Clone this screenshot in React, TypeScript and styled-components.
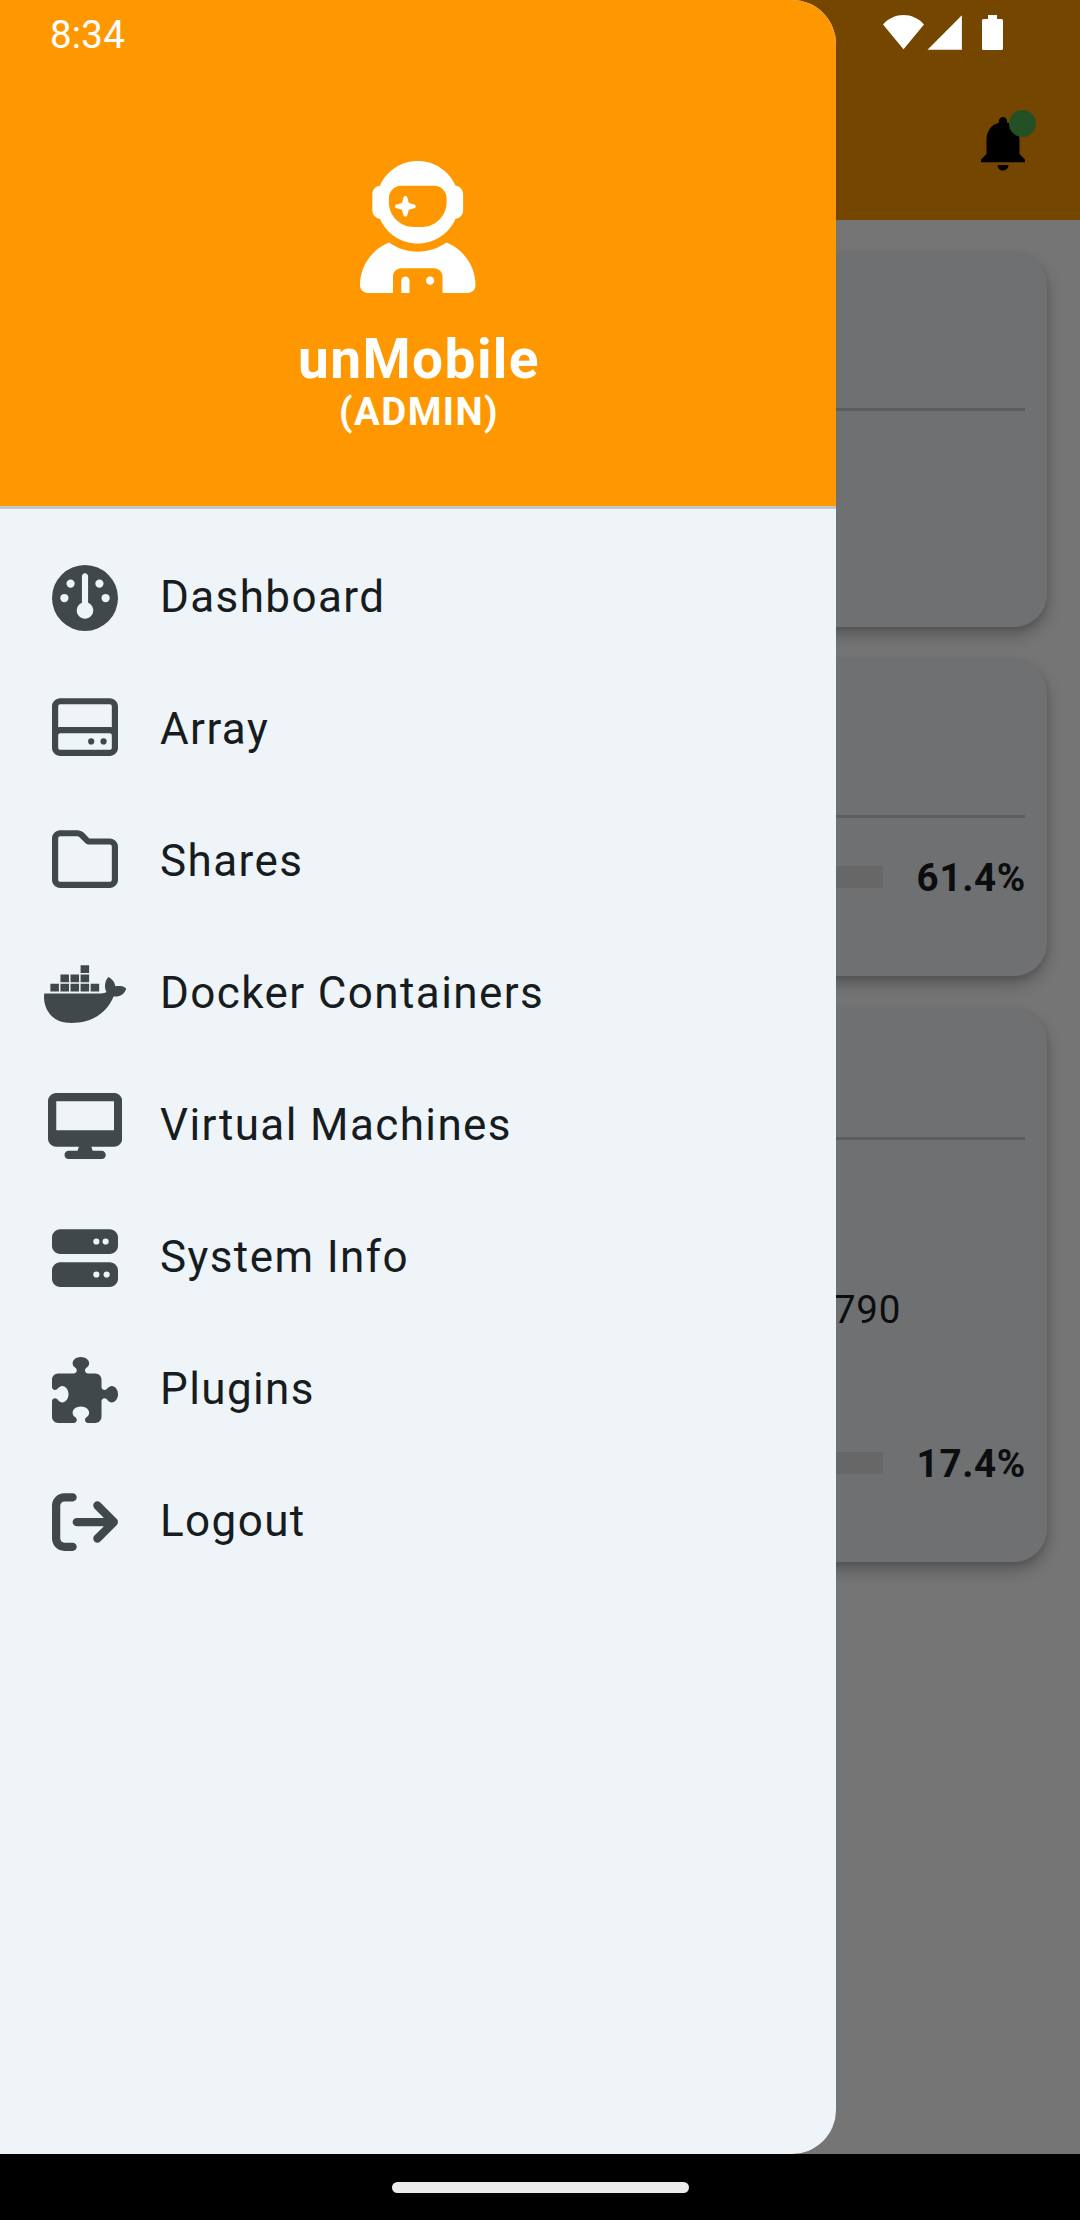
import React from "react";
import styled, { createGlobalStyle } from "styled-components";
import {
  FaArrowRightFromBracket,
  FaDesktop,
  FaDocker,
  FaGauge,
  FaPuzzlePiece,
  FaRegFolder,
  FaRegHardDrive,
  FaServer,
  FaUserAstronaut,
} from "react-icons/fa6";
import { MdNotifications } from "react-icons/md";

const GlobalStyle = createGlobalStyle`
  *, *::before, *::after { box-sizing: border-box; }
  body {
    margin: 0;
    background: #757575;
    font-family: Roboto, "Noto Sans", sans-serif;
  }
`;

const Screen = styled.div`
  position: relative;
  display: flex;
  flex-direction: column;
  width: 1080px;
  height: 2220px;
  overflow: hidden;
  background: #757575;
`;

const AppBar = styled.header`
  flex: none;
  display: flex;
  justify-content: flex-end;
  align-items: flex-end;
  height: 220px;
  padding: 0 44px 44px 0;
  background: #754600;
`;

const BellButton = styled.div`
  position: relative;
  width: 66px;
  height: 66px;
  color: #000;
  svg {
    display: block;
    width: 66px;
    height: 66px;
  }
`;

const BellBadge = styled.span`
  position: absolute;
  top: 0;
  right: 0;
  width: 27px;
  height: 27px;
  border-radius: 50%;
  background: #235025;
`;

const Cards = styled.main`
  flex: 1;
  display: flex;
  flex-direction: column;
  gap: 33px;
  padding: 33px;
`;

const Card = styled.section<{ $height: number; $headHeight: number }>`
  flex: none;
  display: grid;
  grid-template-rows: ${(p) => p.$headHeight}px 1fr;
  height: ${(p) => p.$height}px;
  padding: 0 22px;
  border-radius: 33px;
  background: #6e7072;
  box-shadow: 0 8px 16px rgba(0, 0, 0, 0.24), 0 3px 6px rgba(0, 0, 0, 0.1);
`;

const CardHead = styled.div`
  border-bottom: 3px solid #5c5d5f;
`;

const CardBody = styled.div<{ $top: number }>`
  display: flex;
  flex-direction: column;
  padding-top: ${(p) => p.$top}px;
`;

const Model = styled.div`
  align-self: flex-end;
  width: 191px;
  height: 46px;
  margin-bottom: 107px;
  font-size: 38.5px;
  line-height: 46px;
  letter-spacing: 0.7px;
  color: #0b0d0e;
`;

const Meter = styled.div`
  display: flex;
  justify-content: space-between;
  align-items: center;
  height: 46px;
`;

const MeterTrack = styled.div`
  width: 828px;
  height: 22px;
  background: #676767;
`;

const MeterValue = styled.strong`
  margin-right: -1px;
  padding-top: 2px;
  font-size: 38.5px;
  line-height: 46px;
  font-weight: 700;
  letter-spacing: 0.7px;
  color: #0b0d0e;
`;

const NavigationBar = styled.footer`
  flex: none;
  display: flex;
  justify-content: center;
  align-items: center;
  height: 66px;
  background: #000;
`;

const HomeHandle = styled.span`
  width: 297px;
  height: 11px;
  border-radius: 6px;
  background: #ebebeb;
`;

const Drawer = styled.aside`
  position: absolute;
  top: 0;
  left: 0;
  width: 836px;
  height: 2154px;
  overflow: hidden;
  border-radius: 0 44px 44px 0;
  background: #eef4f7;
`;

const DrawerHeader = styled.div`
  display: flex;
  flex-direction: column;
  align-items: center;
  height: 509px;
  padding-top: 161px;
  border-bottom: 3px solid #bfc8ca;
  background: #ff9800;
  color: #fff;
  svg {
    width: 115.5px;
    height: 132px;
    margin-bottom: 36px;
  }
`;

const AppName = styled.h1`
  margin: 0;
  padding-left: 2px;
  font-size: 55px;
  line-height: 60px;
  font-weight: 700;
  letter-spacing: 1.4px;
`;

const AppRole = styled.p`
  margin: 0;
  padding-left: 2px;
  font-size: 38.5px;
  line-height: 46px;
  font-weight: 700;
  letter-spacing: 1.4px;
`;

const Menu = styled.nav`
  display: flex;
  flex-direction: column;
  padding-top: 23px;
`;

const MenuRow = styled.a`
  display: flex;
  align-items: center;
  height: 132px;
  padding-left: 44px;
`;

const MenuIcon = styled.span<{ $width: number; $lift?: number }>`
  display: flex;
  justify-content: center;
  width: 82px;
  margin-bottom: ${(p) => p.$lift ?? 0}px;
  color: #40484b;
  svg {
    flex: none;
    width: ${(p) => p.$width}px;
    height: 66px;
  }
`;

const MenuLabel = styled.span`
  margin-left: 34px;
  padding-bottom: 2px;
  font-size: 44px;
  line-height: 66px;
  letter-spacing: 1.4px;
  color: #171c1f;
`;

const StatusBar = styled.div`
  position: absolute;
  top: 0;
  left: 0;
  display: flex;
  justify-content: space-between;
  width: 1080px;
  height: 66px;
  padding: 0 76px 0 50px;
  color: #fff;
`;

const Clock = styled.time`
  font-size: 38.5px;
  line-height: 70px;
  letter-spacing: 0.2px;
`;

interface MenuItem {
  label: string;
  icon: React.ReactNode;
  width: number;
  lift?: number;
}

const menu: MenuItem[] = [
  { label: "Dashboard", icon: <FaGauge />, width: 66 },
  { label: "Array", icon: <FaRegHardDrive />, width: 66, lift: 6 },
  { label: "Shares", icon: <FaRegFolder />, width: 66, lift: 6 },
  { label: "Docker Containers", icon: <FaDocker />, width: 82.5 },
  { label: "Virtual Machines", icon: <FaDesktop />, width: 74.25 },
  { label: "System Info", icon: <FaServer />, width: 66 },
  { label: "Plugins", icon: <FaPuzzlePiece />, width: 66 },
  { label: "Logout", icon: <FaArrowRightFromBracket />, width: 66 },
];

function StatusIcons() {
  return (
    <svg width="122" height="66" viewBox="882 0 122 66" fill="currentColor">
      <path d="M903.5 49.2 883 24.5C888.5 18.2 896 15 903.5 15S918.5 18.2 924 24.5Z" />
      <path d="M927.5 49.7 961.9 15.3V49.7Z" />
      <path d="M988 15h9v4h4.5q1.5 0 1.5 1.5v28q0 1.5-1.5 1.5h-18q-1.5 0-1.5-1.5v-28q0-1.5 1.500-1.500h4.500Z" />
    </svg>
  );
}

export default function App() {
  return (
    <>
      <GlobalStyle />
      <Screen>
        <AppBar>
          <BellButton>
            <MdNotifications />
            <BellBadge />
          </BellButton>
        </AppBar>
        <Cards>
          <Card $height={374} $headHeight={158}>
            <CardHead />
          </Card>
          <Card $height={316} $headHeight={158}>
            <CardHead />
            <CardBody $top={36}>
              <Meter>
                <MeterTrack />
                <MeterValue>61.4%</MeterValue>
              </Meter>
            </CardBody>
          </Card>
          <Card $height={553} $headHeight={131}>
            <CardHead />
            <CardBody $top={147}>
              <Model>790</Model>
              <Meter>
                <MeterTrack />
                <MeterValue>17.4%</MeterValue>
              </Meter>
            </CardBody>
          </Card>
        </Cards>
        <NavigationBar>
          <HomeHandle />
        </NavigationBar>

        <Drawer>
          <DrawerHeader>
            <FaUserAstronaut />
            <AppName>unMobile</AppName>
            <AppRole>(ADMIN)</AppRole>
          </DrawerHeader>
          <Menu>
            {menu.map((item) => (
              <MenuRow key={item.label}>
                <MenuIcon $width={item.width} $lift={item.lift}>
                  {item.icon}
                </MenuIcon>
                <MenuLabel>{item.label}</MenuLabel>
              </MenuRow>
            ))}
          </Menu>
        </Drawer>

        <StatusBar>
          <Clock>8:34</Clock>
          <StatusIcons />
        </StatusBar>
      </Screen>
    </>
  );
}
